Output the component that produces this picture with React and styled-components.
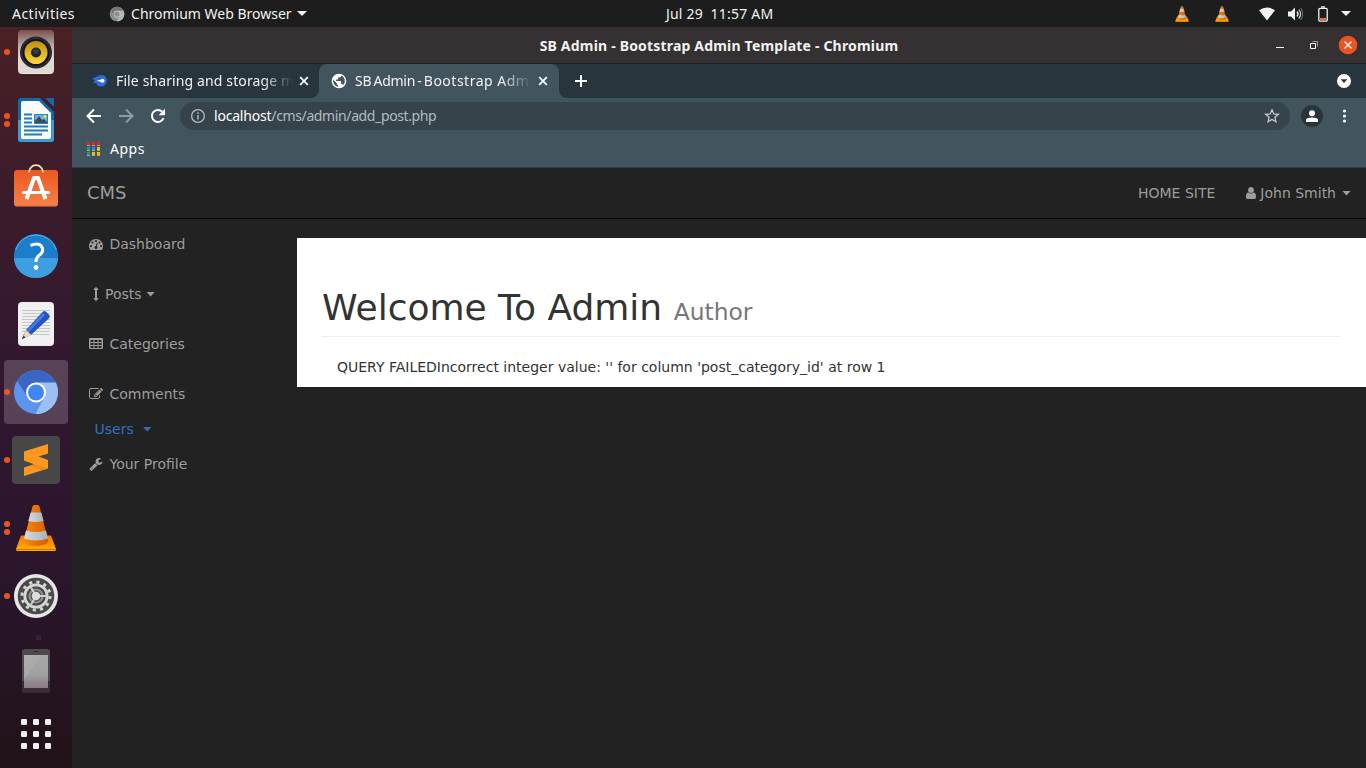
import React from 'react';
import styled, { createGlobalStyle, css } from 'styled-components';

const GlobalStyle = createGlobalStyle`
  * { box-sizing: border-box; }
  body { margin: 0; background: #222; overflow: hidden; }
  svg { display: block; flex: none; }
`;

const uiFont = css`
  font-family: 'Noto Sans', 'Open Sans', sans-serif;
  white-space: pre;
`;

const Screen = styled.div`
  width: 1366px;
  height: 768px;
  display: flex;
  flex-direction: column;
  overflow: hidden;
`;

/* ---------- desktop top bar ---------- */
const TopBar = styled.header`
  height: 27px;
  flex: none;
  display: grid;
  grid-template-columns: 666px auto 1fr;
  align-items: center;
  background: #1d1d1d;
  color: #f2f2f2;
`;
const TopLeft = styled.div`
  display: flex;
  align-items: center;
  padding-left: 12px;
`;
const TopRight = styled.div`
  display: flex;
  align-items: center;
  justify-content: flex-end;
  padding-right: 14px;
`;
const Label = styled.span`
  ${uiFont}
  font-size: ${p => p.$size || 14}px;
  font-weight: ${p => p.$weight || 400};
  letter-spacing: ${p => p.$track || 0}px;
  word-spacing: ${p => p.$word || 0}px;
  line-height: 20px;
  color: ${p => p.$color || '#f2f2f2'};
`;
const Gap = styled.span`
  flex: none;
  width: ${p => p.$w}px;
`;
const Triangle = styled.span`
  width: 0;
  height: 0;
  border: 5px solid transparent;
  border-top-color: #f2f2f2;
  border-bottom: 0;
`;
const Caret = styled.span`
  width: 9px;
  height: 5px;
  background: currentColor;
  clip-path: polygon(0 0, 100% 0, 50% 100%);
`;

/* ---------- dock ---------- */
const Body = styled.div`
  flex: 1;
  min-height: 0;
  display: flex;
`;
const Dock = styled.nav`
  width: 72px;
  flex: none;
  overflow: hidden;
  background: linear-gradient(#4a2124 0%, #401d28 15%, #371a2d 32%, #301730 50%, #2a152b 75%, #211319 100%);
`;
const DockList = styled.div`
  margin-top: -9px;
  display: flex;
  flex-direction: column;
`;
const DockSlot = styled.div`
  height: ${p => p.$h || 68}px;
  display: grid;
  grid-template-columns: 12px 48px 12px;
  align-items: center;
`;
const DockTile = styled.div`
  height: ${p => (p.$h || 68) - 4}px;
  margin: 0 -8px;
  border-radius: 4px;
  display: flex;
  align-items: center;
  justify-content: center;
  background: ${p => (p.$active ? 'rgba(255,255,255,.19)' : 'transparent')};
`;
const Dots = styled.div`
  padding-left: 4px;
  position: relative;
  z-index: 1;
  display: flex;
  flex-direction: column;
  gap: 2.5px;
`;
const Dot = styled.i`
  width: 6px;
  height: 6px;
  border-radius: 50%;
  background: #e95420;
`;
const DockMark = styled.div`
  height: 7px;
  padding: 5px 0 0 36px;
  &::before {
    content: '';
    display: block;
    width: 5px;
    height: 5px;
    background: #30233f;
  }
`;

/* ---------- browser ---------- */
const Browser = styled.main`
  flex: 1;
  min-width: 0;
  display: flex;
  flex-direction: column;
`;
const TitleBar = styled.div`
  height: 37px;
  flex: none;
  display: grid;
  grid-template-columns: 1fr auto 1fr;
  align-items: center;
  background: #353132;
  border-bottom: 1px solid #1f1f20;
`;
const WindowTitle = styled(Label)`
  padding-top: 2px;
`;
const WindowButtons = styled.div`
  display: flex;
  justify-content: flex-end;
  align-items: center;
  padding-right: 8px;
`;
const TabStrip = styled.div`
  height: 34px;
  flex: none;
  display: flex;
  background: linear-gradient(#29353d 50%, #42555f 50%);
`;
const Tab = styled.div`
  width: ${p => p.$w}px;
  display: flex;
  align-items: center;
  padding-left: ${p => p.$pad}px;
  background: ${p => (p.$active ? '#42555f' : '#29353d')};
  border-radius: ${p => (p.$active ? '8px 8px 0 0' : '0 0 8px 0')};
`;
const TabTitle = styled.div`
  width: 181px;
  display: flex;
  mask-image: linear-gradient(90deg, #000 146px, transparent 177px);
`;
const StripRest = styled.div`
  flex: 1;
  display: flex;
  align-items: center;
  justify-content: space-between;
  padding: 0 15px 0 15px;
  background: #29353d;
  border-radius: 0 0 0 8px;
`;
const Toolbar = styled.div`
  height: 32px;
  flex: none;
  display: flex;
  align-items: center;
  padding: 4px 0 0 12px;
  background: #42555f;
`;
const UrlBar = styled.div`
  width: 1110px;
  height: 28px;
  display: flex;
  align-items: center;
  justify-content: space-between;
  padding: 0 10px;
  border-radius: 14px;
  background: #36434b;
`;
const UrlPart = styled.div`
  display: flex;
  align-items: center;
`;
const Avatar = styled.div`
  width: 22px;
  height: 22px;
  border-radius: 50%;
  display: flex;
  align-items: center;
  justify-content: center;
  background: #29353d;
`;
const Bookmarks = styled.div`
  height: 38px;
  flex: none;
  display: flex;
  align-items: center;
  padding: 1px 0 0 15px;
  background: #42555f;
  border-bottom: 1px solid #2f3d45;
`;

/* ---------- web page ---------- */
const Page = styled.div`
  flex: 1;
  display: flex;
  flex-direction: column;
  background: #222;
  color: #333;
  font: 14px/20px 'DejaVu Sans', sans-serif;
`;
const NavBar = styled.div`
  height: 51px;
  flex: none;
  display: flex;
  align-items: center;
  padding: 0 15px;
  border-bottom: 1px solid #080808;
  color: #9d9d9d;
`;
const Brand = styled.span`
  flex: 1;
  font-size: 18px;
`;
const NavLink = styled.a`
  display: flex;
  align-items: center;
  margin-left: 29px;
`;
const Columns = styled.div`
  display: flex;
  align-items: flex-start;
`;
const SideNav = styled.aside`
  width: 225px;
`;
const SideItem = styled.a`
  display: flex;
  align-items: center;
  height: ${p => (p.$plain ? 20 : 50)}px;
  padding-left: ${p => (p.$plain ? 22.5 : 15)}px;
  color: ${p => (p.$plain ? '#2f72bb' : '#9d9d9d')};
`;
const FaBox = styled.span`
  width: 18px;
  display: flex;
  justify-content: center;
  margin-right: ${p => p.$gap}px;
`;
const Content = styled.section`
  flex: 1;
  height: 149px;
  margin-top: 19px;
  padding: 50px 25px 0;
  background: #fff;
`;
const PageHeader = styled.h1`
  margin: 0 0 20px;
  height: 49px;
  font-size: 36px;
  font-weight: 500;
  line-height: 39.6px;
  border-bottom: 1px solid #eee;
  small {
    font-size: 23.4px;
    font-weight: 400;
    color: #777;
  }
`;
const Message = styled.p`
  margin: 0;
  padding-left: 15px;
`;

/* ---------- icons ---------- */
const dial = 'q0-53-37.5-90.5t-90.5-37.5-90.5 37.5-37.5 90.5 37.5 90.5 90.5 37.5 90.5-37.5 37.5-90.5z';
const cell = (x, y) => `M${x + 384} ${y + 224}v-192q0-14-9-23t-23-9h-320q-14 0-23 9t-9 23v192q0 14 9 23t23 9h320q14 0 23-9t9-23z`;
const fa = {
  user: 'M1536 1399q0 109-62.5 187t-150.5 78h-854q-88 0-150.5-78t-62.5-187q0-85 8.5-160.5t31.5-152 58.5-131 94-89 134.5-34.5q131 128 313 128t313-128q76 0 134.5 34.5t94 89 58.5 131 31.5 152 8.5 160.5zm-256-887q0 159-112.5 271.5t-271.5 112.5-271.5-112.5-112.5-271.5 112.5-271.5 271.5-112.5 271.5 112.5 112.5 271.5z',
  gauge: `M384 1152${dial}M576 704${dial}M1004 1185l101-382q6-26-7.5-48.5t-38.5-29.5-48 6.5-30 39.5l-101 382q-60 5-107 43.5t-63 98.5q-20 77 20 146t117 89 146-20 89-117q16-60-6-117t-72-91zM1664 1152${dial}M1024 512${dial}M1472 704${dial}M1792 1152q0 261-141 483-19 29-54 29h-1402q-35 0-54-29-141-221-141-483 0-182 71-348t191-286 286-191 348-71 348 71 286 191 191 286 71 348z`,
  arrows: 'M1216 320q0 26-19 45t-45 19h-128v1024h128q26 0 45 19t19 45-19 45l-256 256q-19 19-45 19t-45-19l-256-256q-19-19-19-45t19-45 45-19h128v-1024h-128q-26 0-45-19t-19-45 19-45l256-256q19-19 45-19t45 19l256 256q19 19 19 45z',
  table: [192, 704, 1216].map(x => [384, 768, 1152].map(y => cell(x, y)).join('')).join('') + 'M1792 288v1088q0 66-47 113t-113 47h-1472q-66 0-113-47t-47-113v-1088q0-66 47-113t113-47h1472q66 0 113 47t47 113z',
  edit: 'M888 1184l116-116-152-152-116 116v56h96v96h56zm440-720q-16-16-33 1l-350 350q-17 17-1 33t33-1l350-350q17-17 1-33zm80 594v190q0 119-84.5 203.5t-203.5 84.5h-832q-119 0-203.5-84.5t-84.5-203.5v-832q0-119 84.5-203.5t203.5-84.5h832q63 0 117 25 15 7 18 23 3 17-9 29l-49 49q-14 14-32 8-23-6-45-6h-832q-66 0-113 47t-47 113v832q0 66 47 113t113 47h832q66 0 113-47t47-113v-126q0-13 9-22l64-64q15-15 35-7t20 29zm-96-738l288 288-672 672h-288v-288zm444 132l-92 92-288-288 92-92q28-28 68-28t68 28l152 152q28 28 28 68t-28 68z',
  wrench: 'M448 1472q0-26-19-45t-45-19-45 19-19 45 19 45 45 19 45-19 19-45zm644-420l-682 682q-37 37-90 37-52 0-91-37l-106-108q-38-36-38-90 0-53 38-91l681-681q39 98 114.5 173.5t173.5 114.5zm634-435q0 39-23 106-47 134-164.5 217.5t-258.5 83.5q-185 0-316.5-131.5t-131.5-316.5 131.5-316.5 316.5-131.5q58 0 121.5 16.5t107.5 46.5q16 11 16 28t-16 28l-293 169v224l193 107q5-3 79-48.5t135.5-81 70.5-35.5q15 0 23.5 10t8.5 25z',
};
const Fa = ({ name }) => (
  <svg width="14" height="14" viewBox="0 0 1792 1792" fill="currentColor" fillRule="evenodd">
    <path d={fa[name]} />
  </svg>
);

const Svg = ({ w = 48, h = w, vb = `0 0 ${w} ${h}`, children, ...rest }) => (
  <svg width={w} height={h} viewBox={vb} fill="none" {...rest}>{children}</svg>
);

const Speaker = () => (
  <Svg>
    <defs>
      <linearGradient id="spk" x1="0" y1="0" x2="0" y2="1">
        <stop offset="0" stopColor="#77504f" /><stop offset=".4" stopColor="#c3b6ae" /><stop offset=".65" stopColor="#dedad1" />
      </linearGradient>
      <linearGradient id="cone" x1="0" y1="0" x2="0" y2="1">
        <stop offset="0" stopColor="#c0900e" /><stop offset="1" stopColor="#ffd83a" />
      </linearGradient>
    </defs>
    <rect x="6" y="2" width="36" height="44" rx="4" fill="url(#spk)" />
    <path d="M10 45.5h28" stroke="#f3f1ec" />
    <circle cx="24" cy="24.500" r="16" fill="#2c2a35" />
    <circle cx="24" cy="24.500" r="13.500" fill="#15141b" />
    <circle cx="24" cy="24.500" r="11.500" fill="url(#cone)" />
    <circle cx="24" cy="24.500" r="5" fill="#1c2022" />
    <circle cx="24" cy="23.500" r="3" fill="#343839" />
  </Svg>
);
const Writer = () => (
  <Svg>
    <path d="M9 2h19l14 14v27q0 3-3 3H9q-3 0-3-3V5q0-3 3-3z" fill="#0e6cab" />
    <path d="M6 24h36v19q0 3-3 3H9q-3 0-3-3z" fill="#3d9bd0" />
    <path d="M33 2h8q1 0 1 1v8z" fill="#0e6cab" />
    <path d="M11 5h16l12 12v24q0 2-2 2H11q-2 0-2-2V7q0-2 2-2z" fill="#fbfbfb" />
    <path d="M12 18.500h8M12 22.500h8M12 26.500h8M12 30.500h24M12 34.500h24M12 38.500h18" stroke="#1b7cba" strokeWidth="2" />
    <rect x="22" y="18" width="14" height="10" fill="#67b3ee" />
    <circle cx="33" cy="20.500" r="1.500" fill="#f6e32a" />
    <path d="M23 28v-3l4-5 3 4 2-1 4 4v1z" fill="#474a4b" />
    <path d="M22.500 18.500h13v9h-13z" stroke="#2083c2" />
  </Svg>
);
const Bag = () => (
  <Svg>
    <defs>
      <linearGradient id="bag" x1="0" y1="0" x2="0" y2="1"><stop offset="0" stopColor="#ec5820" /><stop offset="1" stopColor="#f58149" /></linearGradient>
    </defs>
    <rect x="2" y="6" width="44" height="36.500" rx="3" fill="url(#bag)" />
    <path d="M4 42h40" stroke="#c94c1d" strokeOpacity=".5" />
    <path d="M17 8.500a7 7.300 0 0 1 14 0" stroke="#fbe0b0" strokeWidth="1.800" />
    <path d="M14.500 35L22 14h4l7.500 21" stroke="#fff" strokeWidth="4" strokeLinejoin="round" />
    <path d="M11.500 28.500h25" stroke="#fff" strokeWidth="3.200" strokeLinecap="round" />
  </Svg>
);
const Help = () => (
  <Svg>
    <circle cx="24" cy="24" r="22" fill="#1c7ecb" />
    <path d="M2 26a22 20 0 0 0 44 0z" fill="#3d9fe0" />
    <path d="M3.500 18A21.500 21.500 0 0 1 44.500 18" stroke="#50b8ed" strokeWidth="1" />
    <path d="M18.500 13.500q10-4 12 3 .8 4-3 6.500-3.500 2.500-3.500 7" stroke="#fff" strokeWidth="3" />
    <circle cx="24" cy="35.500" r="2.400" fill="#fff" />
  </Svg>
);
const Notes = () => (
  <Svg>
    <rect x="6" y="2" width="36" height="44" rx="4" fill="#f0f0f0" />
    <path d="M10 10.500h28M10 13.500h28M10 16.500h28M10 19.500h28M10 22.500h28M10 25.500h28M10 28.500h28M10 31.500h28M10 34.500h28" stroke="#c6c6c6" />
    <path d="M10 39l4-9 17-18.500q2-1 3 .2l3.500 3.500q.6 1.500-.5 3L19 35z" fill="#2354c4" />
    <path d="M14.500 30.500L31 13l2 2-16 17z" fill="#4878e6" />
    <path d="M10 39l4-9 5.500 5z" fill="#f4d1b0" />
    <path d="M10 39l1.500-3.500 2 2z" fill="#333" />
  </Svg>
);
const Chromium = ({ w = 48, gray }) => {
  const c = gray ? ['#777', '#8c8c8c', '#b5b5b5', '#cfcfcf', '#8e8e8e'] : ['#3c66c4', '#5d94f0', '#9dbff6', '#fff', '#4285f4'];
  return (
    <Svg w={w} vb="0 0 48 48">
      <circle cx="24" cy="24" r="22" fill={c[1]} />
      <path d="M5 13a22 22 0 0 1 39.500 3H24l-9 12z" fill={c[0]} />
      <path d="M24 14.500h19.800A22 22 0 0 1 23.500 46l9-17z" fill={c[2]} />
      <circle cx="24" cy="24.500" r="10" fill={c[3]} />
      <circle cx="24" cy="24.500" r="8" fill={c[4]} />
    </Svg>
  );
};
const Sublime = () => (
  <Svg>
    <rect width="48" height="48" rx="4" fill="#474747" />
    <path d="M36 8v9.500L26.500 20.500l9.500 3.500v8.500L12 40v-8.500l10-3.200L12 24.500v-9z" fill="#ff9821" />
    <path d="M22 28.300l14 4.200-6 1.900-12-4.900z" fill="#e3811a" opacity=".6" />
  </Svg>
);
const Cone = ({ w = 48 }) => (
  <Svg w={w} vb="0 0 48 48">
    <defs>
      <linearGradient id="vb" x1="0" y1="0" x2="0" y2="1"><stop offset="0" stopColor="#f57900" /><stop offset="1" stopColor="#ffb400" /></linearGradient>
      <linearGradient id="vc" x1="0" y1="0" x2="1" y2="0"><stop offset="0" stopColor="#f78a10" /><stop offset="1" stopColor="#d95a00" /></linearGradient>
      <linearGradient id="vw" x1="0" y1="0" x2="1" y2="0"><stop offset="0" stopColor="#d4dbe0" /><stop offset="1" stopColor="#a9b1b7" /></linearGradient>
    </defs>
    <path d="M9 31.500h30l5 13.500q0 2-1 2H5q-1 0-1-2z" fill="url(#vb)" />
    <path d="M4 45.500h40" stroke="#dc6c00" />
    <path d="M22 1h4q1 0 1.500 1.500L36.500 38q-4 4-12.500 4t-12.500-4L20.500 2.500Q21 1 22 1z" fill="url(#vc)" />
    <path d="M18.700 8.500h10.600l2.400 8.500q-7.700 2-15.400 0z" fill="url(#vw)" />
    <path d="M14 26.500q10 3 20 0l2 8q-12 4-24 0z" fill="url(#vw)" />
  </Svg>
);
const Settings = () => (
  <Svg>
    <circle cx="24" cy="24" r="22" fill="#e6e6e4" />
    <circle cx="24" cy="24" r="18.300" fill="#494b4a" />
    <circle cx="24" cy="24" r="14" stroke="#d6d6d4" strokeWidth="3" strokeDasharray="3.100 4.230" />
    <circle cx="24" cy="24" r="11.200" stroke="#d6d6d4" strokeWidth="2.800" />
    <circle cx="24" cy="24" r="6.500" stroke="#8e8f8e" strokeWidth="2.200" />
    <path d="M24 24h11M24 24l-5.500-9.500M24 24l-5.500 9.500" stroke="#cfcfcd" strokeWidth="2" />
    <circle cx="24" cy="24" r="4.300" fill="#dcdcda" />
  </Svg>
);
const Phone = () => (
  <Svg>
    <defs>
      <linearGradient id="ph" x1="0" y1="0" x2="0" y2="1"><stop offset="0" stopColor="#a8a8a8" /><stop offset=".6" stopColor="#a0a0a0" /><stop offset="1" stopColor="#8a7985" /></linearGradient>
    </defs>
    <rect x="10" y="2" width="28" height="44" rx="3" fill="#4c4a4c" />
    <path d="M10 34h28v9q0 3-3 3H13q-3 0-3-3z" fill="#3a2c37" />
    <rect x="12" y="8" width="24" height="33" fill="url(#ph)" />
    <path d="M12 8h17L12 33z" fill="#b8b8b8" opacity=".35" />
    <path d="M22 4.500h4" stroke="#2b2b2b" />
  </Svg>
);
const AppGrid = () => (
  <Svg>
    {[9, 21, 33].map(x => [9, 21, 33].map(y => <rect key={`${x}-${y}`} x={x} y={y} width="6" height="6" rx="1.200" fill="#f2f2f0" />))}
  </Svg>
);

const dockItems = [
  { icon: <Speaker />, dots: 1 },
  { icon: <Writer />, dots: 2 },
  { icon: <Bag /> },
  { icon: <Help /> },
  { icon: <Notes /> },
  { icon: <Chromium />, dots: 1, active: true },
  { icon: <Sublime />, dots: 1 },
  { icon: <Cone />, dots: 2 },
  { icon: <Settings />, dots: 1 },
];

const DockEntry = ({ icon, dots = 0, active, h }) => (
  <DockSlot $h={h}>
    <Dots>{Array.from({ length: dots }, (_, i) => <Dot key={i} />)}</Dots>
    <DockTile $active={active} $h={h}>{icon}</DockTile>
  </DockSlot>
);

const appColors = ['#f01b22', '#f01b22', '#f01b22', '#17a45c', '#3f7df0', '#fbb90a', '#17a45c', '#fbb90a', '#fbb90a'];
const CloseX = () => <Svg w={10}><path d="M1.200 1.200l7.600 7.600M8.800 1.200L1.200 8.800" stroke="#fff" strokeWidth="1.800" /></Svg>;

export default function App() {
  return (
    <Screen>
      <GlobalStyle />
      <TopBar>
        <TopLeft>
          <Label $track={0.47}>Activities</Label>
          <Gap $w={34} />
          <Chromium w={16} gray />
          <Gap $w={6} />
          <Label>Chromium Web Browser</Label>
          <Gap $w={5.5} />
          <Triangle />
        </TopLeft>
        <Label $track={0.2}>Jul 29  11:57 AM</Label>
        <TopRight>
          <Cone w={16} />
          <Gap $w={24} />
          <Cone w={16} />
          <Gap $w={29} />
          <Svg w={16} h={14}><path d="M0 3.200Q8-2.200 16 3.200L8 13.500z" fill="#f2f2f2" /></Svg>
          <Gap $w={13} />
          <Svg w={16} h={14}>
            <path d="M0 4.500h3l4-4v13l-4-4H0z" fill="#f2f2f2" />
            <path d="M9 4.500q2 2.500 0 5" stroke="#f2f2f2" strokeWidth="1.300" />
            <path d="M10.800 2.500q3.400 4.500 0 9" stroke="#d8d8d8" strokeWidth="1.200" />
            <path d="M12.800 1q3.600 6 0 12" stroke="#777" strokeWidth="1" />
          </Svg>
          <Gap $w={14} />
          <Svg w={10} h={16}>
            <rect x=".8" y="2.300" width="8.400" height="12.900" rx="1.200" stroke="#f2f2f2" strokeWidth="1.300" />
            <path d="M3 1h4" stroke="#f2f2f2" strokeWidth="1.400" />
            <rect x="2" y="12" width="6" height="2" fill="#f36a32" />
          </Svg>
          <Gap $w={13} />
          <Triangle />
          <Gap $w={1} />
        </TopRight>
      </TopBar>
      <Body>
        <Dock>
          <DockList>
            {dockItems.map((item, i) => <DockEntry key={i} {...item} />)}
            <DockMark />
            <DockEntry icon={<Phone />} />
            <DockEntry icon={<AppGrid />} h={58} />
          </DockList>
        </Dock>
        <Browser>
          <TitleBar>
            <span />
            <WindowTitle $weight={700} $size={14} $track={0.19}>SB Admin - Bootstrap Admin Template - Chromium</WindowTitle>
            <WindowButtons>
              <Svg w={8} h={10}><path d="M0 7.500h8" stroke="#f5f5f5" /></Svg>
              <Gap $w={26} />
              <Svg w={8}><path d="M.5 2.500h5v5h-5z" stroke="#fff" /><path d="M2.500.5h5v5" stroke="#999" /></Svg>
              <Gap $w={20} />
              <Svg w={20}><circle cx="10" cy="10" r="9.300" fill="#e95420" /><path d="M6.500 6.500l7 7M13.500 6.500l-7 7" stroke="#fff" strokeWidth="1.400" /></Svg>
            </WindowButtons>
          </TitleBar>
          <TabStrip>
            <Tab $w={247} $pad={20}>
              <Svg w={16} h={14}>
                <path d="M4 3Q7 .5 11 1.300A5.800 5.800 0 0 1 9 12.500Q6 12.300 4.500 10.500 6 10 4 9 1 9 1.500 8 3 7 3 6.300 0 5.300 0 4.500q2-.5 4-1.500z" fill="#2f6bdd" />
                <circle cx="10.500" cy="6.800" r="2" fill="#fff" /><path d="M4.500 6.800l6-1.500v3z" fill="#fff" />
              </Svg>
              <Gap $w={8} />
              <TabTitle><Label $track={0.12}>File sharing and storage m</Label></TabTitle>
              <Gap $w={2} />
              <CloseX />
            </Tab>
            <Tab $w={240} $pad={12} $active>
              <Svg w={16} vb="1 1 22 22">
                <path fill="#fff" d="M12 2C6.480 2 2 6.480 2 12s4.480 10 10 10 10-4.480 10-10S17.520 2 12 2zm-1 17.930c-3.950-.490-7-3.850-7-7.930 0-.620.080-1.210.210-1.790L9 15v1c0 1.100.900 2 2 2v1.930zm6.900-2.540c-.260-.810-1-1.390-1.900-1.390h-1v-3c0-.550-.450-1-1-1H8v-2h2c.550 0 1-.450 1-1V7h2c1.100 0 2-.900 2-2v-.410c2.930 1.190 5 4.060 5 7.410 0 2.080-.800 3.970-2.100 5.390z" />
              </Svg>
              <Gap $w={8} />
              <TabTitle>
                <Label $track={-0.25} $word={-1.2}>SB Admin - </Label>
                <Label $track={0.5}>Bootstrap Adm</Label>
              </TabTitle>
              <Gap $w={2} />
              <CloseX />
            </Tab>
            <StripRest>
              <Svg w={14}><path d="M7 1v12M1 7h12" stroke="#fff" strokeWidth="2" /></Svg>
              <Svg w={14}><circle cx="7" cy="7" r="7" fill="#fff" /><path d="M3.800 5.200h6.400L7 9.200z" fill="#29353d" /></Svg>
            </StripRest>
          </TabStrip>
          <Toolbar>
            <Svg w={20}><path d="M17 10H4M10 3.500L3.500 10l6.500 6.500" stroke="#fff" strokeWidth="2" /></Svg>
            <Gap $w={12} />
            <Svg w={20}><path d="M3 10h13M10 3.500l6.500 6.500-6.500 6.500" stroke="#8f9ba1" strokeWidth="2" /></Svg>
            <Gap $w={12} />
            <Svg w={20}><path d="M15.500 12.200A6 6 0 1 1 14.300 5.800" stroke="#fff" strokeWidth="2" /><path d="M17 2.800v6.400h-6.400z" fill="#fff" /></Svg>
            <Gap $w={12} />
            <UrlBar>
              <UrlPart>
                <Svg w={16}><circle cx="8" cy="8" r="6.400" stroke="#b5bcc0" strokeWidth="1.300" /><path d="M8 7v4.500M8 4.300v1.600" stroke="#b5bcc0" strokeWidth="1.400" /></Svg>
                <Gap $w={8} />
                <Label $color="#fff" $track={-0.2}>localhost</Label>
                <Label $color="#b3bbc0" $track={-0.38}>/cms/admin/add_post.php</Label>
              </UrlPart>
              <Svg w={16}><path d="M8 1.800l1.800 4.100 4.500.4-3.400 3 1 4.400L8 11.400l-3.900 2.300 1-4.400-3.400-3 4.500-.4z" stroke="#c6cbce" strokeWidth="1.300" /></Svg>
            </UrlBar>
            <Gap $w={11} />
            <Avatar><Svg w={12}><circle cx="6" cy="3.200" r="3" fill="#fff" /><path d="M0 12v-2q0-2.500 6-2.500T12 10v2z" fill="#fff" /></Svg></Avatar>
            <Gap $w={19} />
            <Svg w={5} h={14}><circle cx="2.500" cy="2" r="1.600" fill="#fff" /><circle cx="2.500" cy="7" r="1.600" fill="#fff" /><circle cx="2.500" cy="12" r="1.600" fill="#fff" /></Svg>
          </Toolbar>
          <Bookmarks>
            <Svg w={13} h={14}>
              {appColors.map((c, i) => (
                <g key={i}>
                  <rect x={(i % 3) * 5} y={Math.floor(i / 3) * 5} width="3" height="3" fill={c} />
                  <rect x={(i % 3) * 5} y={Math.floor(i / 3) * 5 + 3} width="3" height="1" fill="#a0a9ae" />
                </g>
              ))}
            </Svg>
            <Gap $w={10} />
            <Label $color="#fff" $track={0.5}>Apps</Label>
          </Bookmarks>
          <Page>
            <NavBar>
              <Brand>CMS</Brand>
              <NavLink>HOME SITE</NavLink>
              <NavLink><Fa name="user" /><Gap $w={2} />John Smith<Gap $w={6} /><Caret /></NavLink>
            </NavBar>
            <Columns>
              <SideNav>
                <SideItem><FaBox $gap={4.45}><Fa name="gauge" /></FaBox>Dashboard</SideItem>
                <SideItem><FaBox $gap={0}><Fa name="arrows" /></FaBox>Posts<Gap $w={4.5} /><Caret /></SideItem>
                <SideItem><FaBox $gap={4.45}><Fa name="table" /></FaBox>Categories</SideItem>
                <SideItem><FaBox $gap={4.45}><Fa name="edit" /></FaBox>Comments</SideItem>
                <SideItem $plain>Users<Gap $w={9} /><Caret /></SideItem>
                <SideItem><FaBox $gap={4.45}><Fa name="wrench" /></FaBox>Your Profile</SideItem>
              </SideNav>
              <Content>
                <PageHeader>Welcome To Admin <small>Author</small></PageHeader>
                <Message>QUERY FAILEDIncorrect integer value: '' for column 'post_category_id' at row 1</Message>
              </Content>
            </Columns>
          </Page>
        </Browser>
      </Body>
    </Screen>
  );
}
